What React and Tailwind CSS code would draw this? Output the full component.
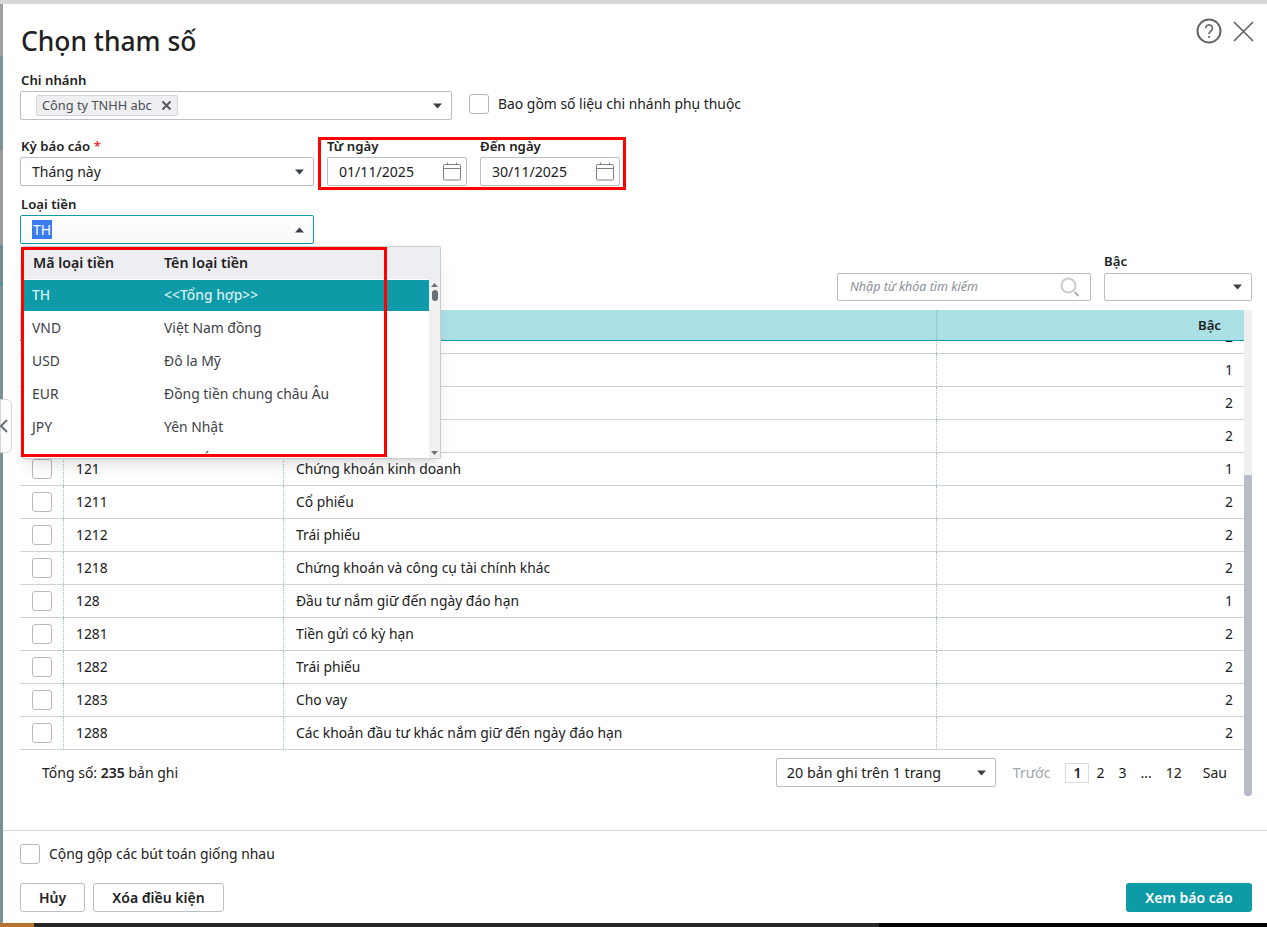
import React from 'react';

const rows = [
    ['', '', 2],
    ['', '', 1],
    ['', '', 2],
    ['', '', 2],
    ['121', 'Chứng khoán kinh doanh', 1],
    ['1211', 'Cổ phiếu', 2],
    ['1212', 'Trái phiếu', 2],
    ['1218', 'Chứng khoán và công cụ tài chính khác', 2],
    ['128', 'Đầu tư nắm giữ đến ngày đáo hạn', 1],
    ['1281', 'Tiền gửi có kỳ hạn', 2],
    ['1282', 'Trái phiếu', 2],
    ['1283', 'Cho vay', 2],
    ['1288', 'Các khoản đầu tư khác nắm giữ đến ngày đáo hạn', 2],
];

const currencies = [
    ['VND', 'Việt Nam đồng'],
    ['USD', 'Đô la Mỹ'],
    ['EUR', 'Đồng tiền chung châu Âu'],
    ['JPY', 'Yên Nhật'],
    ['AUD', 'Đô la Úc'],
];

const Caret = ({ up = false }) => (
    <svg width="9" height="6" viewBox="0 0 9 6" className="shrink-0">
        <path d={up ? 'M4.5 0.5L9 5.5H0Z' : 'M0 0.5H9L4.5 5.5Z'} fill="#3a3f46" />
    </svg>
);

const CalendarIcon = () => (
    <svg width="18" height="19" viewBox="0 0 18 19" fill="none" stroke="#7b8088" strokeWidth="1" className="shrink-0">
        <rect x="0.5" y="2.5" width="17" height="15.5" rx="1" />
        <path d="M0.5 6.5H17.5M4.5 0.5V2.5M13.5 0.5V2.5" />
    </svg>
);

const Checkbox = () => (
    <div className="w-5 h-5 shrink-0 rounded-[3px] border border-[#b5b9c1] bg-white" />
);

const Label = ({ children, className = '' }) => (
    <div className={`h-[20px] leading-[18px] text-[13.2px] font-semibold text-[#212121] ${className}`}>{children}</div>
);

const SelectBox = ({ className = '', children, up = false }) => (
    <div className={`h-[29px] flex items-center justify-between bg-white rounded-[2px] border ${className}`}>
        {children}
        <span className="pr-[9px]"><Caret up={up} /></span>
    </div>
);

const DateField = ({ label, value }) => (
    <div className="w-[140px]">
        <Label>{label}</Label>
        <div className="h-[29px] flex items-center justify-between pl-[11px] pr-[5px] border border-[#babec5] rounded-[2px]">
            <span className="text-[14.1px]">{value}</span>
            <CalendarIcon />
        </div>
    </div>
);

const App = () => {
    return (
        <div className="w-[1267px] h-[927px] overflow-hidden bg-white text-[#212121] font-['Noto_Sans',sans-serif]">
            <div className="h-[4px] bg-[#d4d6d8]" />
            <div className="flex h-[919px]">
                {/* Sliver of the page behind the dialog */}
                <div className="w-[3px] shrink-0 flex flex-col bg-[#7c8f92]">
                    <div className="h-[52px] bg-[#a0a0a0]" />
                    <div className="h-[94px] bg-[#7f9396]" />
                    <div className="h-[95px] bg-[#9b9b9b]" />
                    <div className="h-[40px] bg-[#6f8d91] border-b border-[#2f8f99]" />
                </div>
                <div className="relative w-[1264px] bg-white rounded-l-[6px] flex flex-col">
                    {/* Title */}
                    <div className="h-[67px] pl-[18px] pr-[12px] flex justify-between">
                        <h1 className="mt-[16px] text-[26.4px] leading-[42px] font-medium">Chọn tham số</h1>
                        <div className="mt-[14px] flex items-start gap-[9px]">
                            <svg width="26" height="26" viewBox="0 0 26 26" fill="none" stroke="#62666c" strokeWidth="2">
                                <circle cx="13" cy="13" r="11.5" />
                                <path d="M9.6 10.2a3.4 3.4 0 1 1 5.4 2.8c-1.3.9-2 1.5-2 3" strokeWidth="1.6" />
                                <path d="M13 18v1.8" strokeWidth="1.8" />
                            </svg>
                            <svg width="24" height="24" viewBox="0 0 24 24" fill="none" stroke="#62666c" strokeWidth="1.7" className="mt-px">
                                <path d="M3 3L22 22M22 3L3 22" />
                            </svg>
                        </div>
                    </div>

                    {/* Parameter form */}
                    <div className="pl-[17px] pr-[15px]">
                        <Label className="ml-px">Chi nhánh</Label>
                        <div className="flex items-center">
                            <SelectBox className="w-[432px] border-[#babec5]">
                                <span className="ml-[15px] w-[142px] h-[21px] flex items-center justify-between pl-[5px] pr-[5px] bg-[#eeeff1] border border-[#d3d5d9] rounded-[2px] text-[12.8px] text-[#4a4e55]">
                                    Công ty TNHH abc
                                    <svg width="11" height="11" viewBox="0 0 11 11" stroke="#555a61" strokeWidth="2"><path d="M1.5 1.5L9.5 9.5M9.5 1.5L1.5 9.5" /></svg>
                                </span>
                            </SelectBox>
                            <div className="ml-[17px] mb-[3px] flex items-center gap-[9px] text-[13.9px]">
                                <Checkbox />
                                Bao gồm số liệu chi nhánh phụ thuộc
                            </div>
                        </div>

                        <div className="mt-[17px] flex">
                            <div className="w-[294px]">
                                <Label className="ml-px">Kỳ báo cáo <span className="text-[#ee2b2b]">*</span></Label>
                                <SelectBox className="border-[#babec5]">
                                    <span className="pl-[11px] text-[14px]">Tháng này</span>
                                </SelectBox>
                            </div>
                            <div className="relative ml-[13px] flex gap-[13px]">
                                <DateField label="Từ ngày" value="01/11/2025" />
                                <DateField label="Đến ngày" value="30/11/2025" />
                                <div className="absolute -left-[9px] top-0 w-[308px] h-[53px] border-[3px] border-[#ff0000]" />
                            </div>
                        </div>

                        <div className="mt-[9px] w-[294px]">
                            <Label className="ml-px">Loại tiền</Label>
                            <SelectBox up className="border-[#0e9aa7] bg-gradient-to-b from-white to-[#f7f8f9]">
                                <span className="ml-[11px] h-[19px] leading-[19px] px-px bg-[#3b7cf0] text-white text-[14px]">TH</span>
                            </SelectBox>
                        </div>

                        {/* Filter row */}
                        <div className="mt-[9px] h-[48px] flex justify-end items-end gap-[13px]">
                            <div className="w-[254px] h-[28px] flex items-center justify-between pl-[12px] pr-[10px] border border-[#babec5] rounded-[2px]">
                                <span className="text-[12.5px] italic text-[#8b8f96]">Nhập từ khóa tìm kiếm</span>
                                <svg width="20" height="20" viewBox="0 0 20 20" fill="none" stroke="#c9cbcf" strokeWidth="2">
                                    <circle cx="8.5" cy="8.5" r="7" />
                                    <path d="M14.5 15L18.5 19" stroke="#a9acb1" />
                                </svg>
                            </div>
                            <div className="w-[148px]">
                                <Label className="mb-px">Bậc</Label>
                                <div className="h-[28px] flex items-center justify-end pr-[9px] border border-[#babec5] rounded-[2px]">
                                    <Caret />
                                </div>
                            </div>
                        </div>
                    </div>

                    {/* Grid with its scrollbar */}
                    <div className="mt-[9px] ml-[17px] mr-[15px] flex">
                        <div className="w-[1224px]">
                            <div className="h-[31px] grid grid-cols-[44px_220px_653px_307px] bg-[#abe1e6] border-b border-[#0e9aa7] text-[13.2px] font-semibold leading-[30px]">
                                <div />
                                <div />
                                <div className="border-r border-[#93cdd3]" />
                                <div className="pr-[23px] text-right">Bậc</div>
                            </div>
                            <div className="h-[409px] overflow-hidden">
                                <div className="-mt-[20px]">
                                    {rows.map(([code, name, level], i) => (
                                        <div key={i} className="h-[33px] grid grid-cols-[44px_220px_653px_307px] border-b border-[#cfd1d5] text-[13.85px] leading-[32px]">
                                            <div className="pl-[12px] flex items-center border-r border-dotted border-[#8fc6cc]"><Checkbox /></div>
                                            <div className="pl-[12px] border-r border-dotted border-[#8fc6cc]">{code}</div>
                                            <div className="pl-[12px] border-r border-dotted border-[#8fc6cc]">{name}</div>
                                            <div className="pr-[11px] text-right">{level}</div>
                                        </div>
                                    ))}
                                </div>
                            </div>

                            {/* Pager */}
                            <div className="mt-[8px] h-[29px] flex items-center text-[14px]">
                                <span className="ml-[22px]">Tổng số: <b className="font-semibold">235</b> bản ghi</span>
                                <div className="ml-auto w-[220px]">
                                    <SelectBox className="border-[#babec5]">
                                        <span className="pl-[10px] text-[14.3px]">20 bản ghi trên 1 trang</span>
                                    </SelectBox>
                                </div>
                                <span className="ml-[17px] text-[#a3a6ab]">Trước</span>
                                <span className="ml-[15px] w-[24px] h-[20px] flex items-center justify-center border border-[#dcdde0] font-semibold">1</span>
                                <span className="ml-[7px]">2</span>
                                <span className="ml-[14px]">3</span>
                                <span className="ml-[14px]">...</span>
                                <span className="ml-[14px]">12</span>
                                <span className="ml-[21px] mr-[17px]">Sau</span>
                            </div>
                        </div>
                        <div className="w-[8px] h-[486px] bg-[#f0f0f0]">
                            <div className="mt-[165px] h-[321px] bg-[#b8bcc6] rounded-b-[4px]" />
                        </div>
                    </div>

                    {/* Footer */}
                    <div className="mt-[34px] border-t border-[#d3d5d8] pl-[17px] pr-[15px]">
                        <div className="mt-[13px] flex items-center gap-[9px] text-[13.9px]">
                            <Checkbox />
                            Cộng gộp các bút toán giống nhau
                        </div>
                        <div className="mt-[18px] flex text-[14px] font-semibold">
                            <button className="w-[65px] h-[29px] border border-[#babec5] rounded-[3px]">Hủy</button>
                            <button className="ml-[8px] w-[131px] h-[29px] border border-[#babec5] rounded-[3px]">Xóa điều kiện</button>
                            <button className="ml-auto w-[126px] h-[29px] bg-[#0e9aa7] text-white rounded-[3px]">Xem báo cáo</button>
                        </div>
                    </div>

                    {/* Open currency dropdown */}
                    <div className="absolute left-[19px] top-[242px] w-[419px] h-[213px] overflow-hidden bg-white border border-[#c9cbd0] rounded-[2px] shadow-lg text-[13.9px]">
                        <div className="h-[32px] bg-[#edeef2] flex items-center text-[14.2px] font-semibold">
                            <span className="pl-[10px] w-[141px]">Mã loại tiền</span>
                            <span>Tên loại tiền</span>
                        </div>
                        <div className="flex">
                            <div className="flex-1 h-[177px] pt-px overflow-hidden">
                                <div className="h-[31px] mb-px bg-[#0e9aa7] text-[#d6f1f3] font-medium flex items-center">
                                    <span className="pl-[9px] w-[141px]">TH</span>
                                    <span>&lt;&lt;Tổng hợp&gt;&gt;</span>
                                </div>
                                {currencies.map(([code, name]) => (
                                    <div key={code} className="h-[33px] flex items-center text-[#3d4148]">
                                        <span className="pl-[9px] w-[141px]">{code}</span>
                                        <span>{name}</span>
                                    </div>
                                ))}
                            </div>
                            <div className="w-[11px] h-[180px] bg-[#f0f0f0] flex flex-col items-center justify-between py-[4px]">
                                <div className="flex flex-col items-center gap-[3px]">
                                    <svg width="7" height="4" viewBox="0 0 7 4"><path d="M3.5 0L7 4H0Z" fill="#6b6f76" /></svg>
                                    <div className="w-[6px] h-[11px] rounded-[3px] bg-[#6b6f76]" />
                                </div>
                                <svg width="7" height="4" viewBox="0 0 7 4"><path d="M0 0H7L3.5 4Z" fill="#6b6f76" /></svg>
                            </div>
                        </div>
                    </div>
                    <div className="absolute left-[18px] top-[243px] w-[366px] h-[210px] border-[3px] border-[#ff0000]" />

                    {/* Side collapse tab */}
                    <div className="absolute -left-[3px] top-[395px] w-[12px] h-[54px] flex items-center bg-white border border-[#d3d5d8] rounded-r-[6px]">
                        <svg width="9" height="14" viewBox="0 0 9 14" fill="none" stroke="#6b6f75" strokeWidth="2" className="-ml-[2px]"><path d="M8 1L2 7L8 13" /></svg>
                    </div>
                </div>
            </div>
            <div className="h-[4px] flex">
                <div className="w-[34px] bg-[#b8702f]" />
                <div className="w-[845px] bg-[#272727]" />
                <div className="flex-1 bg-[#020202]" />
            </div>
        </div>
    );
};

export default App;
